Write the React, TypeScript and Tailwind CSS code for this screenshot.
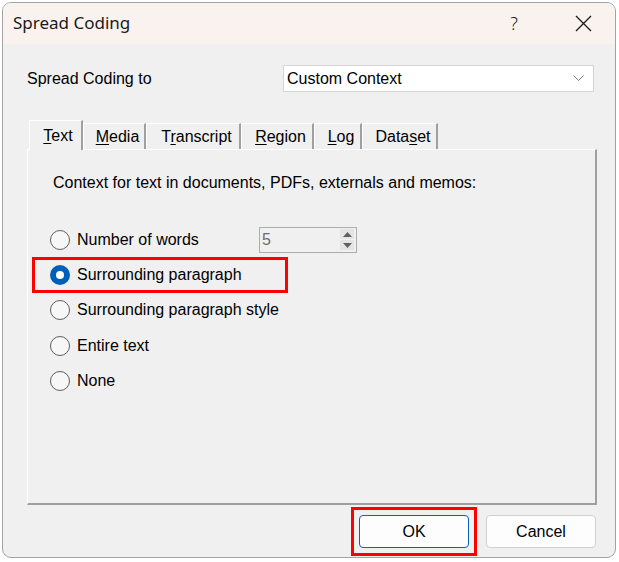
import React from 'react'

const tabs = [
  { pre: '', key: 'T', post: 'ext', w: 'w-[54px]', active: true },
  { pre: '', key: 'M', post: 'edia', w: 'w-[63px]' },
  { pre: 'T', key: 'r', post: 'anscript', w: 'w-[95px]' },
  { pre: '', key: 'R', post: 'egion', w: 'w-[73px]' },
  { pre: '', key: 'L', post: 'og', w: 'w-[48px]' },
  { pre: 'Data', key: 's', post: 'et', w: 'w-[76px]' },
]

const options = [
  'Number of words',
  'Surrounding paragraph',
  'Surrounding paragraph style',
  'Entire text',
  'None',
]

function Radio({ checked }: { checked?: boolean }) {
  if (checked) {
    return (
      <span className="flex h-[20px] w-[20px] shrink-0 items-center justify-center rounded-full bg-[#005fb8]">
        <span className="h-[8px] w-[8px] rounded-full bg-white" />
      </span>
    )
  }
  return (
    <span className="h-[20px] w-[20px] shrink-0 rounded-full border border-[#5f5f5f] bg-[#f7f7f7]" />
  )
}

function Spinner() {
  return (
    <div className="flex h-[26px] w-[98px] items-center border border-[#adadad] bg-[#f0f0f0] pl-[2px] pr-[2px]">
      <span className="flex-1 text-[16px] leading-none text-[#6d6d6d]">5</span>
      <div className="flex flex-col gap-[1px]">
        <span className="flex h-[10px] w-[14px] items-center justify-center bg-[#e4e4e4]">
          <svg width="9" height="5" viewBox="0 0 9 5">
            <path d="M0 5 L4.5 0 L9 5 Z" fill="#606060" />
          </svg>
        </span>
        <span className="flex h-[10px] w-[14px] items-center justify-center bg-[#e4e4e4]">
          <svg width="9" height="5" viewBox="0 0 9 5">
            <path d="M0 0 L9 0 L4.5 5 Z" fill="#606060" />
          </svg>
        </span>
      </div>
    </div>
  )
}

export default function App() {
  return (
    <div className="h-[562px] w-[619px] bg-white p-[2px] font-['Liberation_Sans',Arial,sans-serif] text-[16px] text-black">
      <div className="flex h-[556px] w-[614px] flex-col overflow-hidden rounded-[9px] border border-[#a3a3a3] bg-[#f0f0f0]">
        {/* title bar */}
        <div className="flex h-[41px] shrink-0 items-center bg-[#faf2ef] pl-[10px]">
          <span className="flex-1 pb-[1px] font-['Noto_Sans',sans-serif] text-[17px] text-[#1a1a1a]">
            Spread Coding
          </span>
          <span className="flex w-[76px] justify-center font-['Noto_Sans',sans-serif] text-[18px] font-light text-[#1a1a1a]">
            ?
          </span>
          <span className="flex w-[63px] justify-center">
            <svg width="17" height="17" viewBox="0 0 17 17">
              <path d="M1 1 L16 16 M16 1 L1 16" stroke="#1a1a1a" strokeWidth="1.3" />
            </svg>
          </span>
        </div>

        {/* body */}
        <div className="flex flex-1 flex-col pl-[24px] pr-[18px] pt-[21px]">
          <div className="flex h-[27px] items-center justify-between">
            <span>Spread Coding to</span>
            <div className="mr-[3px] flex h-[27px] w-[311px] items-center border border-[#d5d5d5] bg-white pl-[3px] pr-[9px]">
              <span className="flex-1">Custom Context</span>
              <svg width="11" height="7" viewBox="0 0 11 7">
                <path d="M0.5 0.5 L5.5 5.5 L10.5 0.5" stroke="#7a7a7a" strokeWidth="1" fill="none" />
              </svg>
            </div>
          </div>

          {/* tabs */}
          <div className="mt-[28px] flex h-[29px] items-end pl-[2px]">
            {tabs.map((t) => (
              <div
                key={t.post}
                className={
                  t.active
                    ? `relative z-10 -mb-[1px] flex h-[30px] ${t.w} items-start justify-center border-l border-t border-r-2 border-l-white border-t-white border-r-[#a0a0a0] bg-[#f0f0f0] pl-[5px] pt-[3px]`
                    : `flex h-[26px] ${t.w} items-center justify-center border-l border-t border-r-2 border-l-white border-t-white border-r-[#a0a0a0] pl-[7px]`
                }
              >
                <span>
                  {t.pre}
                  <span className="underline underline-offset-[2px]">{t.key}</span>
                  {t.post}
                </span>
              </div>
            ))}
          </div>

          {/* panel */}
          <div className="h-[356px] border-b-2 border-l border-r-2 border-t border-b-[#a0a0a0] border-l-white border-r-[#a0a0a0] border-t-white pt-[24px]">
            <div className="pl-[25px] leading-[18px]">
              Context for text in documents, PDFs, externals and memos:
            </div>
            <div className="mt-[30px] flex flex-col pl-[22px]">
              {options.map((o, i) => (
                <div key={o} className="relative flex h-[35.3px] items-center">
                  <Radio checked={i === 1} />
                  {i === 0 ? (
                    <>
                      <span className="ml-[7px] w-[182px]">{o}</span>
                      <Spinner />
                    </>
                  ) : (
                    <span className="ml-[7px]">{o}</span>
                  )}
                  {i === 1 && (
                    <span className="pointer-events-none absolute left-[-18px] top-[0px] h-[36px] w-[256px] border-[3px] border-[#ff0000]" />
                  )}
                </div>
              ))}
            </div>
          </div>

          {/* buttons */}
          <div className="mt-[10px] flex justify-end gap-[17px] pr-[1px]">
            <div className="relative">
              <button className="h-[33px] w-[110px] rounded-[4px] border border-[#0067c0] bg-[#fdfdfd]">
                OK
              </button>
              <span className="pointer-events-none absolute -bottom-[8px] -left-[8px] -right-[8px] -top-[8px] border-[3px] border-[#ff0000]" />
            </div>
            <button className="h-[33px] w-[110px] rounded-[4px] border border-[#d0d0d0] bg-[#fdfdfd]">
              Cancel
            </button>
          </div>
        </div>
      </div>
    </div>
  )
}
